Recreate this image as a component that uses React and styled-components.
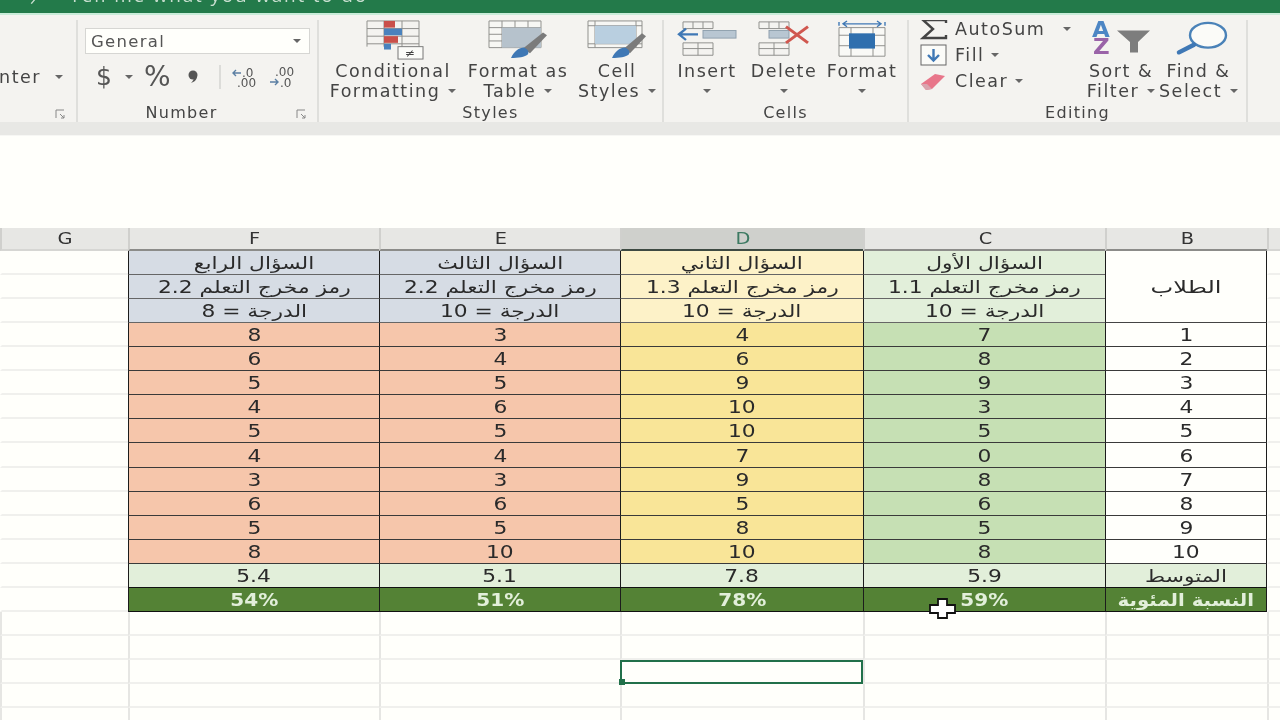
import React from 'react';
import styled, { createGlobalStyle } from 'styled-components';

const GlobalStyle = createGlobalStyle`
  html, body {
    margin: 0;
    padding: 0;
    background: #fffffb;
  }
  body {
    width: 1280px;
    height: 720px;
    overflow: hidden;
    font-family: "DejaVu Sans", sans-serif;
  }
`;

const Page = styled.div`
  position: relative;
  width: 1280px;
  height: 720px;
  overflow: hidden;
  background: #fffffb;
  display: flex;
  flex-direction: column;
  filter: blur(0.4px);
`;

const TitleBar = styled.div`
  flex: 0 0 15px;
  box-sizing: border-box;
  background: #237a4a;
  border-bottom: 2px solid #c9ecd9;
  display: flex;
  align-items: flex-end;
  overflow: hidden;
  color: #c9dfd0;
  font-size: 19px;
  letter-spacing: 1.8px;
  font-family: "Open Sans", sans-serif;
`;
const TellMe = styled.span`
  margin: 0 0 8px 32px;
  line-height: 20px;
  white-space: nowrap;
`;
const Chevron = styled.span`
  margin: 0 0 5px 30px;
  line-height: 20px;
`;

const Ribbon = styled.div`
  flex: 0 0 107px;
  min-height: 0;
  display: flex;
  background: #f4f3f0;
  color: #444;
  font-size: 17.5px;
  letter-spacing: 1.5px;
`;
const Group = styled.div`
  flex: 0 0 ${({ $w }) => $w}px;
  width: ${({ $w }) => $w}px;
  box-sizing: border-box;
  display: flex;
  flex-direction: column;
  overflow: hidden;
  border-right: 2px solid #dfdfdc;
  margin-top: 5px;
`;
const GroupBody = styled.div`
  flex: 0 0 81px;
  height: 81px;
  display: flex;
  min-height: 0;
  padding-left: ${({ $pad }) => $pad || 0}px;
`;
const GroupFoot = styled.div`
  position: relative;
  flex: 0 0 21px;
  line-height: 24px;
  font-size: 16px;
  letter-spacing: 1.3px;
  text-align: center;
  padding-right: ${({ $shift }) => $shift || 0}px;
`;
const Launcher = styled.svg`
  position: absolute;
  right: 10px;
  top: 8px;
  width: 11px;
  height: 11px;
`;

const Caret = styled.i`
  display: inline-block;
  flex: none;
  width: 0;
  height: 0;
  margin-left: ${({ $gap }) => $gap || 0}px;
  border-left: 4px solid transparent;
  border-right: 4px solid transparent;
  border-top: 4px solid #666;
  vertical-align: middle;
`;

const BigButton = styled.div`
  flex: 0 0 ${({ $w }) => $w}px;
  display: flex;
  flex-direction: column;
  align-items: center;
  white-space: nowrap;
  line-height: 20px;
  text-align: center;
`;
const BigIcon = styled.svg`
  width: 62px;
  height: 40px;
  flex: 0 0 40px;
  margin-bottom: 1px;
`;
const CaretLine = styled.span`
  display: flex;
  align-items: center;
  gap: 8px;
  height: 20px;
`;

const PartialBody = styled.div`
  flex: 0 0 81px;
  box-sizing: border-box;
  display: flex;
  justify-content: flex-end;
  align-items: flex-end;
  gap: 14px;
  line-height: 20px;
  padding: 0 13px 14px 0;
  white-space: nowrap;
  i {
    margin-bottom: 8px;
  }
`;

const NumberColumn = styled.div`
  flex: 1;
  display: flex;
  flex-direction: column;
  padding: 8px 7px 0 7px;
`;
const Combo = styled.div`
  height: 26px;
  box-sizing: border-box;
  background: #fffffb;
  border: 1px solid #d6d6d3;
  display: flex;
  align-items: center;
  justify-content: space-between;
  padding: 0 8px 0 5px;
  font-size: 16.5px;
  letter-spacing: 1.3px;
  color: #555;
`;
const FormatRow = styled.div`
  margin-top: 8px;
  height: 30px;
  display: flex;
  align-items: center;
  padding-left: 11px;
`;
const Symbol = styled.span`
  font-size: ${({ $size }) => $size || 24}px;
  color: #555;
  letter-spacing: 0;
  margin-left: ${({ $gap }) => $gap || 0}px;
  line-height: 30px;
`;
const CommaIcon = styled.svg`
  width: 12px;
  height: 16px;
  margin-left: 16px;
`;
const RowDivider = styled.span`
  width: 2px;
  height: 24px;
  background: #dcdcd9;
  margin: 0 11px 0 20px;
`;
const DecimalIcon = styled.svg`
  width: 30px;
  height: 24px;
  flex: 0 0 30px;
  margin-right: ${({ $gap }) => $gap || 0}px;
`;

const EditStack = styled.div`
  flex: 0 0 163px;
  margin-top: -4px;
  display: flex;
  flex-direction: column;
`;
const EditRow = styled.div`
  height: 26px;
  flex: 0 0 26px;
  display: flex;
  align-items: center;
  white-space: nowrap;
  gap: 7px;
`;
const EditIcon = styled.svg`
  width: 28px;
  height: 24px;
  flex: 0 0 28px;
`;

const Band = styled.div`
  flex: 0 0 14px;
  box-sizing: border-box;
  background: #e8e8e5;
  border-bottom: 1px solid #f7f7f4;
`;
const FormulaGap = styled.div`
  flex: 0 0 92px;
  background: #fffffb;
`;

const Sheet = styled.div`
  direction: rtl;
  display: grid;
  grid-template-columns: 13px 162px 242px 243px 241px 251px 128px;
  grid-template-rows: 23px 24px 24px 24px repeat(12, 24.1px) repeat(5, 24px);
  color: #2a2a2a;
`;

const ColHead = styled.div`
  background: ${({ $active }) => ($active ? '#cfd0cc' : '#e7e7e4')};
  color: ${({ $active }) => ($active ? '#3d7a62' : '#333')};
  border-bottom: 2px solid ${({ $active, $table }) => {
    if ($active) return '#3e4a42';
    return $table ? '#8c8c89' : '#d6d6d3';
  }};
  border-left: 2px solid #d0d0cd;
  box-sizing: border-box;
  display: flex;
  align-items: center;
  justify-content: center;
  font-size: 15.5px;
  line-height: 1;
  padding-top: 2px;
`;

const Blank = styled.div`
  box-sizing: border-box;
  border-bottom: 2px solid #f0f0ed;
  border-left: 2px solid ${({ $noLine }) => ($noLine ? 'transparent' : '#e6e6e3')};
  background: #fffffb;
`;

const Cell = styled.div`
  box-sizing: border-box;
  background: ${({ $bg }) => $bg};
  color: ${({ $fg }) => $fg || '#2a2a2a'};
  font-weight: ${({ $bold }) => ($bold ? 700 : 400)};
  font-size: 17px;
  border-left: 1.5px solid #1c1c1c;
  border-bottom: 1.5px solid ${({ $rowLine }) => $rowLine || '#3a3a3a'};
  ${({ $edge }) => ($edge ? 'border-right: 1.5px solid #1c1c1c;' : '')}
  ${({ $span }) => ($span ? `grid-row: span ${$span};` : '')}
  display: flex;
  align-items: center;
  justify-content: center;
  white-space: nowrap;
  line-height: 1;
  padding-top: 2px;
`;
const CellText = styled.span`
  display: inline-block;
  transform: scaleX(${({ $stretch }) => $stretch || 1.28});
`;

const SelectedCell = styled(Blank)`
  position: relative;
  border: 2px solid #21704a;
  background: #fffffb;
`;
const FillHandle = styled.span`
  position: absolute;
  left: -3px;
  bottom: -3px;
  width: 6px;
  height: 6px;
  background: #21704a;
`;
const Cursor = styled.svg`
  position: absolute;
  left: 929px;
  top: 598px;
  width: 27px;
  height: 21px;
`;

const COLS = [
  { name: 'C', title: 'السؤال الأول', code: 'رمز مخرج التعلم 1.1', score: 'الدرجة = 10', h: '#e2efda', b: '#c6e0b4', avg: '5.9', pct: '59%', vals: [7, 8, 9, 3, 5, 0, 8, 6, 5, 8] },
  { name: 'D', title: 'السؤال الثاني', code: 'رمز مخرج التعلم 1.3', score: 'الدرجة = 10', h: '#fdf2c8', b: '#f9e598', avg: '7.8', pct: '78%', vals: [4, 6, 9, 10, 10, 7, 9, 5, 8, 10], active: true },
  { name: 'E', title: 'السؤال الثالث', code: 'رمز مخرج التعلم 2.2', score: 'الدرجة = 10', h: '#d6dce4', b: '#f6c6ab', avg: '5.1', pct: '51%', vals: [3, 4, 5, 6, 5, 4, 3, 6, 5, 10] },
  { name: 'F', title: 'السؤال الرابع', code: 'رمز مخرج التعلم 2.2', score: 'الدرجة = 8', h: '#d6dce4', b: '#f6c6ab', avg: '5.4', pct: '54%', vals: [8, 6, 5, 4, 5, 4, 3, 6, 5, 8] },
];

const AVG_BG = '#e2efda';
const PCT_BG = '#548235';
const PCT_FG = '#e2efda';

function Table() {
  const heads = [
    <ColHead key="h0" />,
    <ColHead key="hB" $table>
      <CellText $stretch={1.25}>B</CellText>
    </ColHead>,
    ...COLS.map(c => (
      <ColHead key={c.name} $active={c.active} $table>
        <CellText $stretch={1.25}>{c.name}</CellText>
      </ColHead>
    )),
    <ColHead key="hG">
      <CellText $stretch={1.25}>G</CellText>
    </ColHead>,
  ];

  const rows = [];
  // three header rows
  ['title', 'code', 'score'].forEach((key, i) => {
    rows.push(<Blank key={`l${i}`} $noLine />);
    if (i === 0) {
      rows.push(
        <Cell key="students" $bg="#fffffb" $span={3} $edge $rowLine="#444">
          <CellText $stretch={1.42}>الطلاب</CellText>
        </Cell>,
      );
    }
    COLS.forEach(c => {
      rows.push(
        <Cell key={c.name + key} $bg={c.h} $rowLine="#666">
          <CellText>{c[key]}</CellText>
        </Cell>,
      );
    });
    rows.push(<Blank key={`g${i}`} $noLine />);
  });
  // student marks
  for (let i = 0; i < 10; i += 1) {
    rows.push(<Blank key={`sl${i}`} $noLine />);
    rows.push(
      <Cell key={`s${i}`} $bg="#fffffb" $edge>
        <CellText>{i + 1}</CellText>
      </Cell>,
    );
    COLS.forEach(c => {
      rows.push(
        <Cell key={c.name + i} $bg={c.b}>
          <CellText>{c.vals[i]}</CellText>
        </Cell>,
      );
    });
    rows.push(<Blank key={`sg${i}`} $noLine />);
  }
  // average
  rows.push(<Blank key="al" $noLine />);
  rows.push(
    <Cell key="avgL" $bg={AVG_BG} $edge $rowLine="#111">
      <CellText>المتوسط</CellText>
    </Cell>,
  );
  COLS.forEach(c => {
    rows.push(
      <Cell key={`${c.name}avg`} $bg={AVG_BG} $rowLine="#111">
        <CellText>{c.avg}</CellText>
      </Cell>,
    );
  });
  rows.push(<Blank key="ag" $noLine />);
  // percentage
  rows.push(<Blank key="pl" $noLine />);
  rows.push(
    <Cell key="pctL" $bg={PCT_BG} $fg={PCT_FG} $bold $edge $rowLine="#111">
      <CellText $stretch={1.16}>النسبة المئوية</CellText>
    </Cell>,
  );
  COLS.forEach(c => {
    rows.push(
      <Cell key={`${c.name}pct`} $bg={PCT_BG} $fg={PCT_FG} $bold $rowLine="#111">
        <CellText $stretch={1.18}>{c.pct}</CellText>
      </Cell>,
    );
  });
  rows.push(<Blank key="pg" $noLine />);
  // empty rows under the table
  for (let r = 0; r < 5; r += 1) {
    for (let c = 0; c < 7; c += 1) {
      if (r === 2 && c === 3) {
        rows.push(
          <SelectedCell key="selected">
            <FillHandle />
          </SelectedCell>,
        );
      } else {
        rows.push(<Blank key={`e${r}-${c}`} />);
      }
    }
  }

  return (
    <Sheet>
      {heads}
      {rows}
    </Sheet>
  );
}

const gridLines = '#8f8f8c';

function App() {
  return (
    <Page>
      <GlobalStyle />
      <TitleBar>
        <Chevron>›</Chevron>
        <TellMe>Tell me what you want to do</TellMe>
      </TitleBar>
      <Ribbon>
        <Group $w={78}>
          <PartialBody>
            <span>Merge &amp; Center</span>
            <Caret />
          </PartialBody>
          <GroupFoot>
            <Launcher viewBox="0 0 11 11">
              <path d="M1 9V1h8M5 5l4 4M9 6v3H6" fill="none" stroke="#888" />
            </Launcher>
          </GroupFoot>
        </Group>

        <Group $w={241}>
          <GroupBody>
            <NumberColumn>
              <Combo>
                General
                <Caret />
              </Combo>
              <FormatRow>
                <Symbol $size={25}>$</Symbol>
                <Caret $gap={13} />
                <Symbol $size={28} $gap={11}>%</Symbol>
                <CommaIcon viewBox="0 0 12 16">
                  <circle cx="6" cy="6" r="4.500" fill="#555" />
                  <path d="M10 7c0 4-3 6-6 7 2-2 3-4 3-6z" fill="#555" />
                </CommaIcon>
                <RowDivider />
                <DecimalIcon viewBox="0 0 30 24" $gap={7}>
                  <path d="M1 8h8M4 5L1 8l3 3" fill="none" stroke="#5b7fa3" strokeWidth="1.4" />
                  <text x="10" y="12" fontSize="12" fill="#555" letterSpacing="0">.0</text>
                  <text x="5" y="22" fontSize="12" fill="#555" letterSpacing="0">.00</text>
                </DecimalIcon>
                <DecimalIcon viewBox="0 0 30 24">
                  <text x="6" y="11" fontSize="12" fill="#555" letterSpacing="0">.00</text>
                  <path d="M1 17h8M6 14l3 3-3 3" fill="none" stroke="#5b7fa3" strokeWidth="1.4" />
                  <text x="11" y="22" fontSize="12" fill="#555" letterSpacing="0">.0</text>
                </DecimalIcon>
              </FormatRow>
            </NumberColumn>
          </GroupBody>
          <GroupFoot $shift={32}>
            Number
            <Launcher viewBox="0 0 11 11">
              <path d="M1 9V1h8M5 5l4 4M9 6v3H6" fill="none" stroke="#888" />
            </Launcher>
          </GroupFoot>
        </Group>

        <Group $w={345}>
          <GroupBody $pad={9}>
            <BigButton $w={130}>
              <BigIcon viewBox="0 0 62 42" preserveAspectRatio="none">
                <path d="M5 1h52M5 9h52M5 17h52M5 25h52M5 1v27M22 1v27M40 1v27M57 1v27" stroke={gridLines} fill="none" />
                <rect x="22" y="1" width="11" height="7" fill="#c9504a" />
                <rect x="22" y="9" width="18" height="7" fill="#4a82bd" />
                <rect x="22" y="17" width="14" height="7" fill="#c9504a" />
                <rect x="22" y="25" width="7" height="6" fill="#4a82bd" />
                <rect x="36" y="28" width="25" height="13" fill="#fbfbf8" stroke="#777" />
                <text x="43" y="39" fontSize="12" fill="#444" letterSpacing="0">≠</text>
              </BigIcon>
              <span>Conditional</span>
              <CaretLine>Formatting <Caret /></CaretLine>
            </BigButton>
            <BigButton $w={120}>
              <BigIcon viewBox="0 0 62 42" preserveAspectRatio="none">
                <path d="M2 1h52v28H2zM2 8h52M2 15h52M2 22h52M15 1v28M28 1v28M41 1v28" stroke={gridLines} fill="#f7f7f4" />
                <rect x="15" y="8" width="39" height="21" fill="#b6c2cc" />
                <path d="M36 30l20-17 4 3-17 19z" fill="#7b7b7b" />
                <path d="M24 40c3-7 8-11 13-11 4 2 5 4 4 7-3 3-10 4-17 4z" fill="#3f78b5" />
              </BigIcon>
              <span>Format as</span>
              <CaretLine>Table <Caret /></CaretLine>
            </BigButton>
            <BigButton $w={74}>
              <BigIcon viewBox="0 0 62 42" preserveAspectRatio="none">
                <path d="M2 1h54v28H2zM2 6h54M2 25h54M9 1v28M50 1v28" stroke={gridLines} fill="#f7f7f4" />
                <rect x="9" y="6" width="41" height="19" fill="#b9cfe0" />
                <path d="M38 30l18-16 4 3-16 18z" fill="#7b7b7b" />
                <path d="M26 40c3-7 8-11 13-11 4 2 5 4 4 7-3 3-10 4-17 4z" fill="#3f78b5" />
              </BigIcon>
              <span>Cell</span>
              <CaretLine>Styles <Caret /></CaretLine>
            </BigButton>
          </GroupBody>
          <GroupFoot>Styles</GroupFoot>
        </Group>

        <Group $w={245}>
          <GroupBody $pad={5}>
            <BigButton $w={76}>
              <BigIcon viewBox="0 0 62 42" preserveAspectRatio="none">
                <path d="M7 2h30v7H7zM17 2v7M27 2v7M7 24h30v13H7zM7 30h30M22 24v13" stroke={gridLines} fill="none" />
                <rect x="27" y="11" width="33" height="8" fill="#b8c6d2" stroke="#8fa0ae" />
                <path d="M4 15h18M10 9l-7 6 7 6" fill="none" stroke="#3f78b5" strokeWidth="2.4" />
              </BigIcon>
              <span>Insert</span>
              <CaretLine><Caret /></CaretLine>
            </BigButton>
            <BigButton $w={78}>
              <BigIcon viewBox="0 0 62 42" preserveAspectRatio="none">
                <path d="M6 2h30v7H6zM16 2v7M26 2v7M6 24h30v13H6zM6 30h30M21 24v13" stroke={gridLines} fill="none" />
                <rect x="16" y="11" width="20" height="8" fill="#b8c6d2" stroke="#8fa0ae" />
                <path d="M33 7l22 17M55 7L33 24" stroke="#d0574f" strokeWidth="3" fill="none" />
              </BigIcon>
              <span>Delete</span>
              <CaretLine><Caret /></CaretLine>
            </BigButton>
            <BigButton $w={78}>
              <BigIcon viewBox="0 0 62 42" preserveAspectRatio="none">
                <path d="M8 8h46v30H8zM8 16h46M8 27h46M20 8v30M42 8v30" stroke={gridLines} fill="#f9f9f6" />
                <rect x="18" y="14" width="26" height="16" fill="#2f6fae" />
                <path d="M8 2v4M54 2v4M12 4h38M16 1l-4 3 4 3M46 1l4 3-4 3" fill="none" stroke="#3f78b5" strokeWidth="1.4" />
              </BigIcon>
              <span>Format</span>
              <CaretLine><Caret /></CaretLine>
            </BigButton>
          </GroupBody>
          <GroupFoot>Cells</GroupFoot>
        </Group>

        <Group $w={339}>
          <GroupBody $pad={11}>
            <EditStack>
              <EditRow>
                <EditIcon viewBox="0 0 28 24">
                  <path d="M26 6V3H3l10 9-10 9h23v-3" fill="none" stroke="#444" strokeWidth="2.4" />
                </EditIcon>
                AutoSum
                <Caret $gap={11} />
              </EditRow>
              <EditRow>
                <EditIcon viewBox="0 0 28 24">
                  <rect x="1" y="2" width="25" height="20" fill="#fbfbf8" stroke="#666" />
                  <path d="M13.500 6v11M8 12l5.500 5.500L19 12" fill="none" stroke="#3f78b5" strokeWidth="2.4" />
                </EditIcon>
                Fill
                <Caret />
              </EditRow>
              <EditRow>
                <EditIcon viewBox="0 0 28 24">
                  <path d="M1 15L15 5l10 2-13 13-6 1z" fill="#e8768a" />
                  <path d="M1 15l5 6 6-1-5-5z" fill="#d9a4ae" />
                </EditIcon>
                Clear
                <Caret />
              </EditRow>
            </EditStack>
            <BigButton $w={76}>
              <BigIcon viewBox="0 0 62 42" preserveAspectRatio="none">
                <text x="2" y="18" fontSize="23" fontWeight="700" fill="#4d86c4" letterSpacing="0">A</text>
                <text x="3" y="36" fontSize="23" fontWeight="700" fill="#9a63a8" letterSpacing="0">Z</text>
                <path d="M27 11h33L48 23v11h-8V23z" fill="#7d7d7d" />
              </BigIcon>
              <span>Sort &amp;</span>
              <CaretLine>Filter <Caret /></CaretLine>
            </BigButton>
            <BigButton $w={78}>
              <BigIcon viewBox="0 0 62 42" preserveAspectRatio="none">
                <ellipse cx="40" cy="16" rx="18" ry="13" fill="#fbfbf8" stroke="#4a82b8" strokeWidth="2.4" />
                <path d="M26 26L11 34" stroke="#3f78b5" strokeWidth="4.500" strokeLinecap="round" />
              </BigIcon>
              <span>Find &amp;</span>
              <CaretLine>Select <Caret /></CaretLine>
            </BigButton>
          </GroupBody>
          <GroupFoot>Editing</GroupFoot>
        </Group>
      </Ribbon>
      <Band />
      <FormulaGap />
      <Table />
      <Cursor viewBox="0 0 27 21">
        <path d="M9 1h9v6h8v8h-8v5H9v-5H1V7h8z" fill="#fff" stroke="#111" strokeWidth="1.8" />
      </Cursor>
    </Page>
  );
}

export default App;
